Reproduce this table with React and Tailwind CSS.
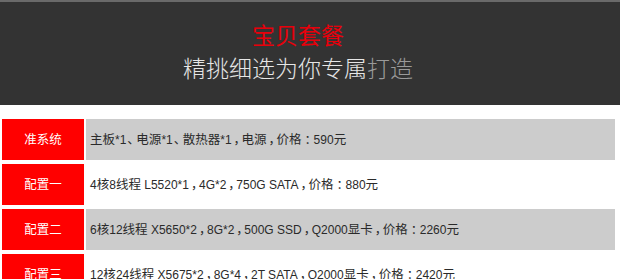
const rows = [
  { name: '准系统', text: '主板*1、电源*1、散热器*1，电源，价格：590元', gray: true },
  { name: '配置一', text: '4核8线程 L5520*1，4G*2，750G SATA，价格：880元', gray: false },
  { name: '配置二', text: '6核12线程 X5650*2，8G*2，500G SSD，Q2000显卡，价格：2260元', gray: true },
  { name: '配置三', text: '12核24线程 X5675*2，8G*4，2T SATA，Q2000显卡，价格：2420元', gray: false },
];

// 把文字拆成 汉字 / 全角标点 / 西文 三种片段
function splitRuns(text) {
  const runs = [];
  for (const ch of text) {
    let type = 'latin';
    if (/[\u4e00-\u9fff]/.test(ch)) type = 'cjk';
    else if (/[\u3000-\u303f\uff00-\uffef]/.test(ch)) type = 'punct';
    const last = runs[runs.length - 1];
    if (last && last.type === type && type !== 'punct') last.text += ch;
    else runs.push({ type, text: ch });
  }
  return runs;
}

function RichText({ text }) {
  return splitRuns(text).map((r, i) => {
    if (r.type === 'cjk') {
      return (
        <span key={i} className="text-[12.5px]" style={{ fontFamily: '"Noto Sans CJK SC", sans-serif' }}>
          {r.text}
        </span>
      );
    }
    if (r.type === 'punct') {
      // 标点收窄并略向右移，接近原图的居中效果
      const cls =
        r.text === '、'
          ? 'w-[10px] pl-[1px]'
          : r.text === '：'
            ? 'w-[12px] pl-[3px]'
            : 'w-[10px] pl-[2px]';
      return (
        <span
          key={i}
          className={`inline-flex overflow-visible text-[12.5px] ${cls}`}
          style={{ fontFamily: '"Noto Sans CJK SC", sans-serif' }}
        >
          {r.text}
        </span>
      );
    }
    return (
      <span key={i} className="text-[12px]" style={{ fontFamily: '"Liberation Sans", sans-serif' }}>
        {r.text}
      </span>
    );
  });
}

export default function App() {
  return (
    <div
      className="w-[620px] h-[279px] overflow-hidden bg-white"
      style={{ fontFamily: '"Noto Sans CJK SC", "Noto Sans", sans-serif' }}
    >
      {/* 头部 */}
      <div className="h-[105px] bg-[#333333] border-t-2 border-[#6a6a6a] flex flex-col items-center pr-[24px]">
        <div className="mt-[17px] text-[23px] leading-[30px] text-[#e8000b]">宝贝套餐</div>
        <div className="mt-[3px] text-[23px] leading-[30px] font-light text-[#e6e6e6]">
          精挑细选为你专属<span className="text-[#9a9a9a]">打造</span>
        </div>
      </div>

      <div className="pt-[14px] pl-[2px] pr-[5px] flex flex-col gap-[4px]">
        {rows.map((row) => (
          <div key={row.name} className="flex gap-[2px] h-[41px]">
            <div className="w-[82px] shrink-0 bg-[#ff0000] text-white text-[12.5px] flex items-center justify-center">
              {row.name}
            </div>
            <div
              className={`flex-1 flex items-center pl-[4px] text-[#2a2a2a] whitespace-nowrap ${
                row.gray ? 'bg-[#cccccc]' : 'bg-white'
              }`}
            >
              <div className="leading-[16px] -mt-[2px]">
                <RichText text={row.text} />
              </div>
            </div>
          </div>
        ))}
      </div>
    </div>
  );
}
